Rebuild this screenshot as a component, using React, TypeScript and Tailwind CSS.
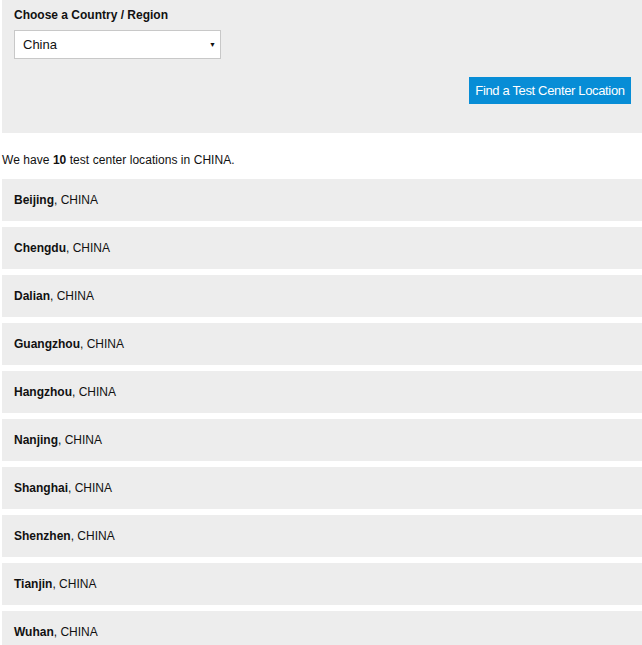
const cities = [
  "Beijing",
  "Chengdu",
  "Dalian",
  "Guangzhou",
  "Hangzhou",
  "Nanjing",
  "Shanghai",
  "Shenzhen",
  "Tianjin",
  "Wuhan",
];

export default function App() {
  return (
    <div
      className="w-[642px] pl-[2px] text-[#111] text-[12px]"
      style={{ fontFamily: '"Liberation Sans", Arial, sans-serif' }}
    >
      <section className="h-[133px] bg-[#ededed] px-[12px] pt-[8px]">
        <label className="block h-[14px] font-bold leading-[14px]">Choose a Country / Region</label>
        <div className="mt-[8px] flex h-[29px] w-[207px] items-center justify-between border border-[#c8c8c8] bg-white pl-[8px] pr-[4px] text-[13px]">
          <span>China</span>
          <span className="text-[7px] leading-none">▼</span>
        </div>
        <div className="mt-[18px] flex justify-end">
          <button className="-mr-[1px] h-[27px] w-[162px] bg-[#078dd6] text-[13px] tracking-[-0.35px] text-white">
            Find a Test Center Location
          </button>
        </div>
      </section>

      <p className="mt-[20px] h-[14px] leading-[14px] tracking-[0.05px]">
        We have <b>10</b> test center locations in CHINA.
      </p>

      <ul className="mt-[12px] flex flex-col gap-[6px]">
        {cities.map((city) => (
          <li key={city} className="flex h-[42px] items-center bg-[#ededed] px-[12px]">
            <span>
              <b>{city}</b>, CHINA
            </span>
          </li>
        ))}
      </ul>
    </div>
  );
}
